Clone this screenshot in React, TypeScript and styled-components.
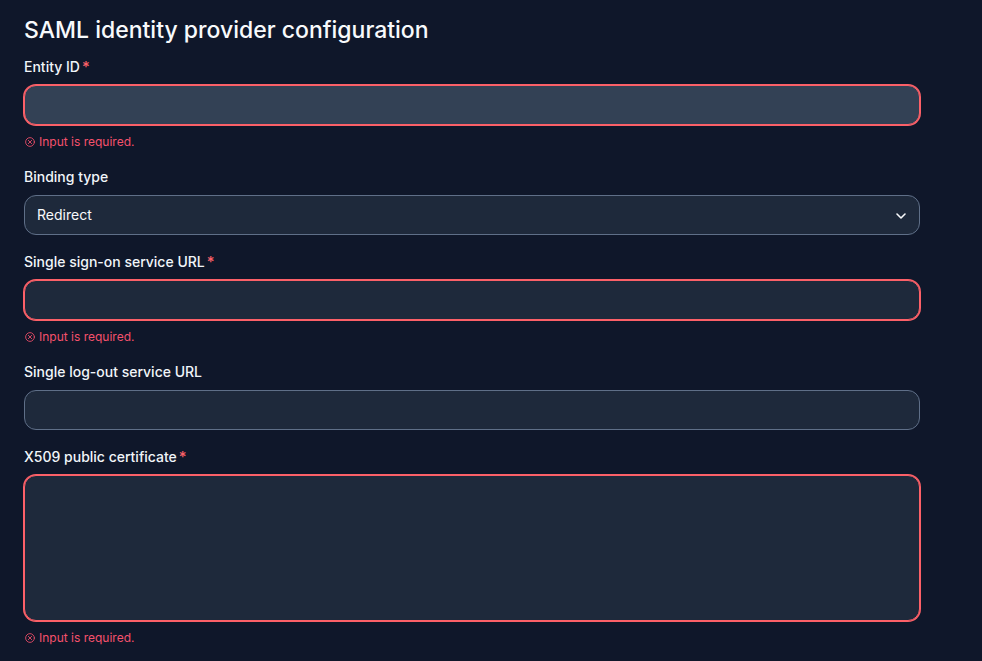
import React from "react";
import styled, { createGlobalStyle } from "styled-components";

const Global = createGlobalStyle`
  html, body { margin: 0; padding: 0; background: #0f172a; }
  * { box-sizing: border-box; }
  body { font-family: Inter, "Liberation Sans", sans-serif; color: #f8fafc; overflow: hidden; }
`;

const Page = styled.main`
  width: 982px;
  height: 661px;
  overflow: hidden;
  padding: 14px 62px 0 24px;
  background: #0f172a;
`;

const Title = styled.h1`
  margin: 0 0 10px;
  font-size: 23px;
  line-height: 32px;
  font-weight: 500;
  letter-spacing: 0;
  color: #f8fafc;
`;

const Form = styled.form`
  display: flex;
  flex-direction: column;
  gap: 16px;
`;

const Field = styled.div`
  display: flex;
  flex-direction: column;
`;

const Label = styled.label`
  display: block;
  margin-bottom: 8px;
  font-size: 14px;
  line-height: 21px;
  font-weight: 500;
  color: #f1f5f9;
`;

const Star = styled.span`
  margin-left: 2px;
  font-size: 15px;
  line-height: 0;
  font-weight: 500;
  color: #fc6068;
`;

const controlBase = `
  display: block;
  width: 100%;
  border-radius: 12px;
  outline: none;
  font-family: inherit;
  font-size: 14px;
  color: #f8fafc;
`;

const Input = styled.input<{ $invalid?: boolean; $hover?: boolean }>`
  ${controlBase}
  height: 40px;
  padding: 0 12px;
  background: ${(p) => (p.$hover ? "#334155" : "#1e293b")};
  border: 1px solid ${(p) => (p.$invalid ? "#fc6068" : "#5f6f88")};
  box-shadow: ${(p) => (p.$invalid ? "0 0 0 1px #fc6068" : "none")};
`;

const TextArea = styled.textarea`
  ${controlBase}
  height: 146px;
  padding: 8px 12px;
  resize: none;
  background: #1e293b;
  border: 1px solid #fc6068;
  box-shadow: 0 0 0 1px #fc6068;
`;

const SelectBox = styled.div`
  ${controlBase}
  height: 40px;
  padding: 0 12px 1px;
  display: flex;
  align-items: center;
  justify-content: space-between;
  background: #1e293b;
  border: 1px solid #5f6f88;
`;

const Chevron = styled.svg`
  width: 16px;
  height: 16px;
  margin: 2px -2px 0 0;
  fill: none;
  stroke: #f8fafc;
  stroke-width: 2.4;
  stroke-linecap: round;
  stroke-linejoin: round;
`;

const ErrorText = styled.div`
  display: flex;
  align-items: center;
  gap: 4px;
  margin-top: 8px;
  height: 17px;
  font-size: 12px;
  line-height: 17px;
  color: #f5516c;
`;

const ErrorIcon = styled.svg`
  width: 10px;
  height: 10px;
  margin-left: 1px;
  fill: none;
  stroke: currentColor;
  stroke-width: 2;
  stroke-linecap: round;
`;

const Err = () => (
  <ErrorText>
    <ErrorIcon viewBox="0 0 24 24">
      <circle cx="12" cy="12" r="10.5" />
      <path d="m8 8 8 8M16 8l-8 8" />
    </ErrorIcon>
    Input is required.
  </ErrorText>
);

export default function App() {
  return (
    <Page>
      <Global />
      <Title>SAML identity provider configuration</Title>
      <Form>
        <Field>
          <Label>Entity ID<Star>*</Star></Label>
          <Input $invalid $hover />
          <Err />
        </Field>
        <Field>
          <Label>Binding type</Label>
          <SelectBox>
            Redirect
            <Chevron viewBox="0 0 24 24"><path d="m6 9 6 6 6-6" /></Chevron>
          </SelectBox>
        </Field>
        <Field>
          <Label>Single sign-on service URL<Star>*</Star></Label>
          <Input $invalid />
          <Err />
        </Field>
        <Field>
          <Label>Single log-out service URL</Label>
          <Input />
        </Field>
        <Field>
          <Label>X509 public certificate<Star>*</Star></Label>
          <TextArea />
          <Err />
        </Field>
      </Form>
    </Page>
  );
}
